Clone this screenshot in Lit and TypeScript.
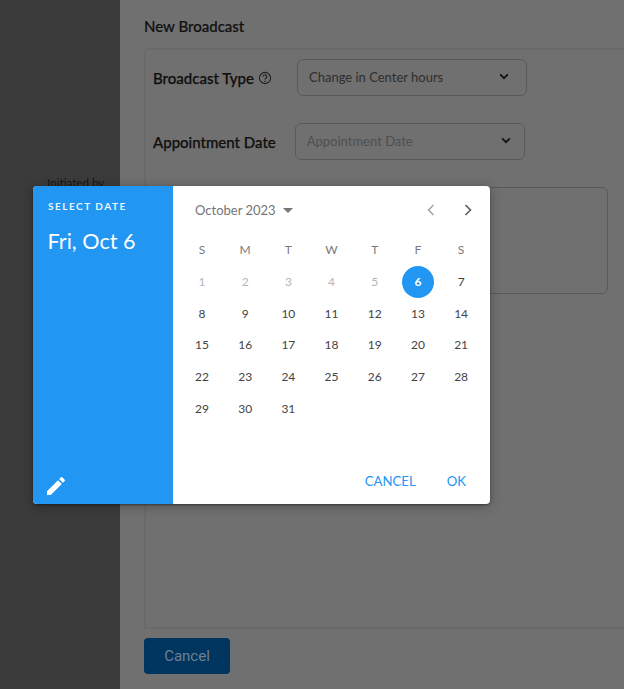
import { LitElement, html, css } from "lit";
import { customElement } from "lit/decorators.js";

const chevDown = html`<svg class="chev" width="10" height="7" viewBox="0 0 10 7"><path d="M1.2 1.4 5 5.2 8.8 1.4" fill="none" stroke="#111" stroke-width="1.7"/></svg>`;

@customElement("app-root")
export class AppRoot extends LitElement {
  static styles = css`
    :host { display: block; width: 624px; height: 689px; position: relative; overflow: hidden; font-family: Lato, sans-serif; background: #707070; }
    * { box-sizing: border-box; }
    .page { display: flex; height: 689px; }
    .side { width: 120px; flex: none; background: #3b3b3b; padding: 176px 0 0 47px; font-size: 11.6px; line-height: 14px; color: #151515; white-space: nowrap; }
    .main { flex: 1; min-width: 0; padding: 17px 0 0 24px; display: flex; flex-direction: column; }
    .title { font-size: 15px; font-weight: 500; line-height: 19px; color: #111; height: 31px; -webkit-text-stroke: 0.2px #111; }
    .panel { width: 520px; height: 581px; border: 2px solid #6a6a6a; border-radius: 4px 0 0 0; padding: 9px 0 0 7px; display: flex; flex-direction: column; }
    .row { display: flex; align-items: center; }
    .r1 { height: 37px; }
    .r2 { height: 37px; margin-top: 27px; }
    .label { font-size: 15px; line-height: 20px; font-weight: 500; color: #0f0f0f; -webkit-text-stroke: 0.25px #0f0f0f; white-space: nowrap; }
    .help { margin-left: 4.5px; display: block; }
    .select { width: 230.5px; height: 37px; border: 1px solid #5a5a5a; border-radius: 6px; display: flex; align-items: center; justify-content: space-between; padding: 0 17px 2px 11px; font-size: 13px; color: #2e2e2e; }
    .s1 { margin-left: 24.5px; }
    .s2 { margin-left: 19px; color: #4f4f4f; padding-right: 13px; }
    .chev { display: block; }
    .area { width: 313px; height: 107px; margin: 27px 0 0 142px; border: 1px solid #5a5a5a; border-radius: 6px; }
    .cancel-page { width: 86px; height: 36px; margin-top: 9px; border: 0; border-radius: 4px; background: #003560; color: #6c8093; font-family: Roboto, sans-serif; font-size: 15px; display: flex; align-items: center; justify-content: center; }

    .dialog { position: absolute; left: 33px; top: 186px; width: 457px; height: 318px; display: flex; border-radius: 4px; overflow: hidden; background: #fff; box-shadow: 0 2px 12px rgba(0,0,0,.3), 0 1px 2px rgba(0,0,0,.35); }
    .head { width: 140px; flex: none; background: #2196f3; color: #fff; padding: 14px 0 0 15px; display: flex; flex-direction: column; }
    .over { font-size: 10px; line-height: 13px; font-weight: 700; letter-spacing: 1.5px; opacity: .9; }
    .date { font-size: 21.6px; line-height: 30px; margin: 13px 0 0 -0.5px; white-space: nowrap; }
    .pencil { margin: auto 0 6px -4px; display: block; }
    .body { flex: 1; display: flex; flex-direction: column; padding: 0; }
    .nav { height: 48px; display: flex; align-items: center; padding: 0 16px 0 22px; }
    .month { font-size: 13px; color: #757575; }
    .caret { margin-left: 7px; display: block; }
    .arrows { margin-left: auto; display: flex; gap: 25px; align-items: center; }
    .arrows svg { display: block; }
    .grid { display: grid; grid-template-columns: repeat(7, 43.2px); grid-auto-rows: 31.7px; margin-left: 7.4px; }
    .cell { display: flex; align-items: center; justify-content: center; font-size: 12px; color: #444; }
    .dow { color: #7a7a7a; }
    .off { color: #b5b5b5; }
    .sel { position: relative; z-index: 0; color: #fff; font-weight: 700; }
    .sel::before { content: ""; position: absolute; left: 5.6px; top: -0.15px; width: 32px; height: 32px; border-radius: 50%; background: #2196f3; z-index: -1; }
    .actions { margin-top: auto; height: 32px; display: flex; justify-content: flex-end; gap: 31px; padding: 0 24px 0 0; font-size: 13.2px; color: #2196f3; align-items: flex-start; line-height: 18px; }
  `;

  render() {
    const dows = ["S", "M", "T", "W", "T", "F", "S"];
    const days = Array.from({ length: 31 }, (_, i) => i + 1);
    return html`
      <div class="page">
        <aside class="side">Initiated by</aside>
        <main class="main">
          <div class="title">New Broadcast</div>
          <section class="panel">
            <div class="row r1">
              <span class="label">Broadcast Type</span>
              <svg class="help" width="14" height="14" viewBox="0 0 14 14">
                <circle cx="7" cy="7" r="5.6" fill="none" stroke="#1f1f1f" stroke-width="1.1"/>
                <path d="M5.2 5.6a1.8 1.8 0 1 1 2.8 1.5c-.7.4-1 .7-1 1.5" fill="none" stroke="#1f1f1f" stroke-width="1.1"/>
                <circle cx="7" cy="10.2" r=".7" fill="#1f1f1f"/>
              </svg>
              <div class="select s1"><span>Change in Center hours</span>${chevDown}</div>
            </div>
            <div class="row r2">
              <span class="label">Appointment Date</span>
              <div class="select s2"><span>Appointment Date</span>${chevDown}</div>
            </div>
            <div class="area"></div>
          </section>
          <div class="cancel-page">Cancel</div>
        </main>
      </div>

      <div class="dialog">
        <div class="head">
          <div class="over">SELECT DATE</div>
          <div class="date">Fri, Oct 6</div>
          <svg class="pencil" width="24" height="24" viewBox="0 0 24 24"><path fill="#fff" d="M3 17.25V21h3.75L17.81 9.94l-3.75-3.75L3 17.25zM20.71 7.04a1 1 0 0 0 0-1.41l-2.34-2.34a1 1 0 0 0-1.41 0l-1.83 1.83 3.75 3.75 1.83-1.83z"/></svg>
        </div>
        <div class="body">
          <div class="nav">
            <span class="month">October 2023</span>
            <svg class="caret" width="10" height="5" viewBox="0 0 10 5"><path d="M0 0h10L5 5z" fill="#757575"/></svg>
            <div class="arrows">
              <svg width="12" height="14" viewBox="0 0 12 14"><path d="M8.5 2 3.5 7l5 5" fill="none" stroke="#a3a3a3" stroke-width="1.5"/></svg>
              <svg width="12" height="14" viewBox="0 0 12 14"><path d="M3.5 2l5 5-5 5" fill="none" stroke="#5c5c5c" stroke-width="1.6"/></svg>
            </div>
          </div>
          <div class="grid">
            ${dows.map((d) => html`<div class="cell dow">${d}</div>`)}
            ${days.map((d) => html`<div class="cell ${d < 6 ? "off" : d === 6 ? "sel" : ""}">${d}</div>`)}
          </div>
          <div class="actions"><span>CANCEL</span><span>OK</span></div>
        </div>
      </div>
    `;
  }
}
